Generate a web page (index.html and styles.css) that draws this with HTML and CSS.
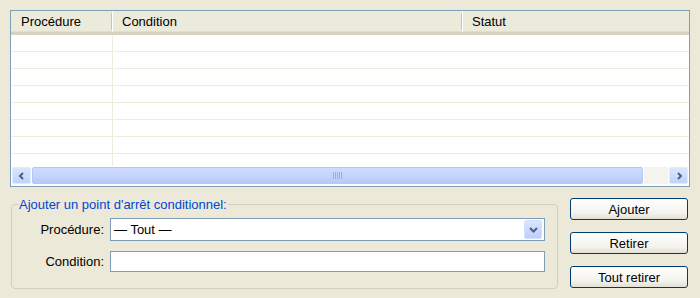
FILE: index.html
```html
<!DOCTYPE html>
<html lang="fr">
<head>
<meta charset="UTF-8">
<title>Points d'arrêt</title>
<link rel="stylesheet" href="styles.css">
</head>
<body>

<div class="liste">
    <div class="entete">
        <div class="col col-proc">Procédure</div>
        <div class="col col-cond">Condition</div>
        <div class="col col-statut">Statut</div>
    </div>
    <div class="lignes">
        <div class="ligne"><div class="cell-proc"></div></div>
        <div class="ligne"><div class="cell-proc"></div></div>
        <div class="ligne"><div class="cell-proc"></div></div>
        <div class="ligne"><div class="cell-proc"></div></div>
        <div class="ligne"><div class="cell-proc"></div></div>
        <div class="ligne"><div class="cell-proc"></div></div>
        <div class="ligne"><div class="cell-proc"></div></div>
        <div class="ligne derniere"><div class="cell-proc"></div></div>
    </div>
    <div class="defilement">
        <div class="fleche">
            <svg width="8" height="8" viewBox="0 0 8 8"><path d="M5 1 L2 4 L5 7" fill="none" stroke="#4d6185" stroke-width="2"/></svg>
        </div>
        <div class="curseur">
            <svg width="9" height="7" viewBox="0 0 9 7">
                <path d="M0.5 0 V7 M2.5 0 V7 M4.5 0 V7 M6.5 0 V7 M8.5 0 V7" stroke="#8fb0f3" stroke-width="1"/>
            </svg>
        </div>
        <div class="piste"></div>
        <div class="fleche">
            <svg width="8" height="8" viewBox="0 0 8 8"><path d="M3 1 L6 4 L3 7" fill="none" stroke="#4d6185" stroke-width="2"/></svg>
        </div>
    </div>
</div>

<div class="bas">
    <fieldset class="groupe">
        <legend>Ajouter un point d'arrêt conditionnel:</legend>
        <div class="champs">
            <label>Procédure:</label>
            <div class="combo">
                <span>— Tout —</span>
                <div class="combo-btn">
                    <svg width="9" height="6" viewBox="0 0 9 6"><path d="M1 1 L4.5 4.5 L8 1" fill="none" stroke="#4d6185" stroke-width="2"/></svg>
                </div>
            </div>
            <label>Condition:</label>
            <div class="saisie"></div>
        </div>
    </fieldset>
    <div class="boutons">
        <button>Ajouter</button>
        <button>Retirer</button>
        <button>Tout retirer</button>
    </div>
</div>

</body>
</html>
```

FILE: styles.css
```css
body {
    margin: 0;
    padding: 10px 11px 0 10px;
    background: #ece9d8;
    font-family: "Liberation Sans", Arial, sans-serif;
    font-size: 13px;
    color: #000;
}
.liste {
    width: 678px;
    height: 175px;
    border: 1px solid #7f9db9;
    background: white;
    display: flex;
    flex-direction: column;
}
.entete {
    height: 21px;
    background: #ebeadb;
    display: flex;
    align-items: center;
    border-bottom: 3px solid #d6d2c2;
    box-shadow: inset 0 -1px 0 #e2dece;
}
.col {
    height: 100%;
    display: flex;
    align-items: center;
    padding-left: 10px;
    box-sizing: border-box;
}
.col-proc {
    width: 100px;
}
.col-cond {
    width: 350px;
}
.col-cond, .col-statut {
    border-left: 1px solid #c7c5b2;
    box-shadow: inset 1px 0 0 white;
}
.entete .col-cond, .entete .col-statut {
    border-image: linear-gradient(to bottom, transparent 3px, #c7c5b2 3px, #c7c5b2 18px, transparent 18px) 1;
}
.col-statut {
    flex: 1;
}
.lignes {
    flex: 1;
    overflow: hidden;
}
.ligne {
    height: 16px;
    border-bottom: 1px solid #efecdf;
    display: flex;
}
.cell-proc {
    width: 101px;
    border-right: 1px solid #efecdf;
}
.defilement {
    height: 17px;
    padding: 1px 1px 2px 1px;
    background: #fefefb;
    display: flex;
    gap: 1px;
}
.fleche {
    width: 19px;
    height: 17px;
    box-sizing: border-box;
    border: 1px solid #e2eafe;
    border-radius: 2px;
    background: linear-gradient(to bottom, #dbe6fe, #c0d2fd);
    display: flex;
    align-items: center;
    justify-content: center;
}
.curseur {
    width: 611px;
    height: 17px;
    box-sizing: border-box;
    border: 1px solid #b4c8f6;
    border-radius: 2px;
    background: linear-gradient(to bottom, #cddcfe, #c2d3fc 60%, #b5c9f8);
    display: flex;
    align-items: center;
    justify-content: center;
}
.piste {
    flex: 1;
    background: #f4f3ee;
}
.bas {
    display: flex;
    gap: 12px;
    margin-top: 10px;
    padding-left: 1px;
}
.groupe {
    width: 547px;
    height: 92px;
    margin: 0;
    padding: 0;
    border: 1px solid #d0d0bf;
    border-radius: 4px;
    box-sizing: border-box;
}
.groupe legend {
    color: #0046d5;
    padding: 0 1px;
    margin-left: 6px;
}
.champs {
    display: grid;
    grid-template-columns: 92px 435px;
    column-gap: 6px;
    row-gap: 10px;
    align-items: center;
    margin-top: 6px;
}
.champs label {
    text-align: right;
}
.combo {
    height: 23px;
    box-sizing: border-box;
    border: 1px solid #7f9db9;
    background: white;
    display: flex;
    align-items: center;
    padding-left: 3px;
    padding-right: 2px;
    justify-content: space-between;
}
.combo-btn {
    width: 18px;
    height: 19px;
    box-sizing: border-box;
    border: 1px solid #d2dffd;
    border-radius: 2px;
    background: linear-gradient(to bottom, #dbe5fe, #bcd0fb);
    display: flex;
    align-items: center;
    justify-content: center;
}
.saisie {
    height: 21px;
    box-sizing: border-box;
    border: 1px solid #7f9db9;
    background: white;
}
.boutons {
    display: flex;
    flex-direction: column;
    gap: 12px;
    margin-top: 1px;
}
.boutons button {
    width: 118px;
    height: 22px;
    border: 1px solid #003c74;
    border-radius: 3px;
    background: linear-gradient(to bottom, #ffffff, #f3f2ec 70%, #e2e0d5);
    font-family: "Liberation Sans", Arial, sans-serif;
    font-size: 13px;
    color: #000;
    padding: 0;
}
```
